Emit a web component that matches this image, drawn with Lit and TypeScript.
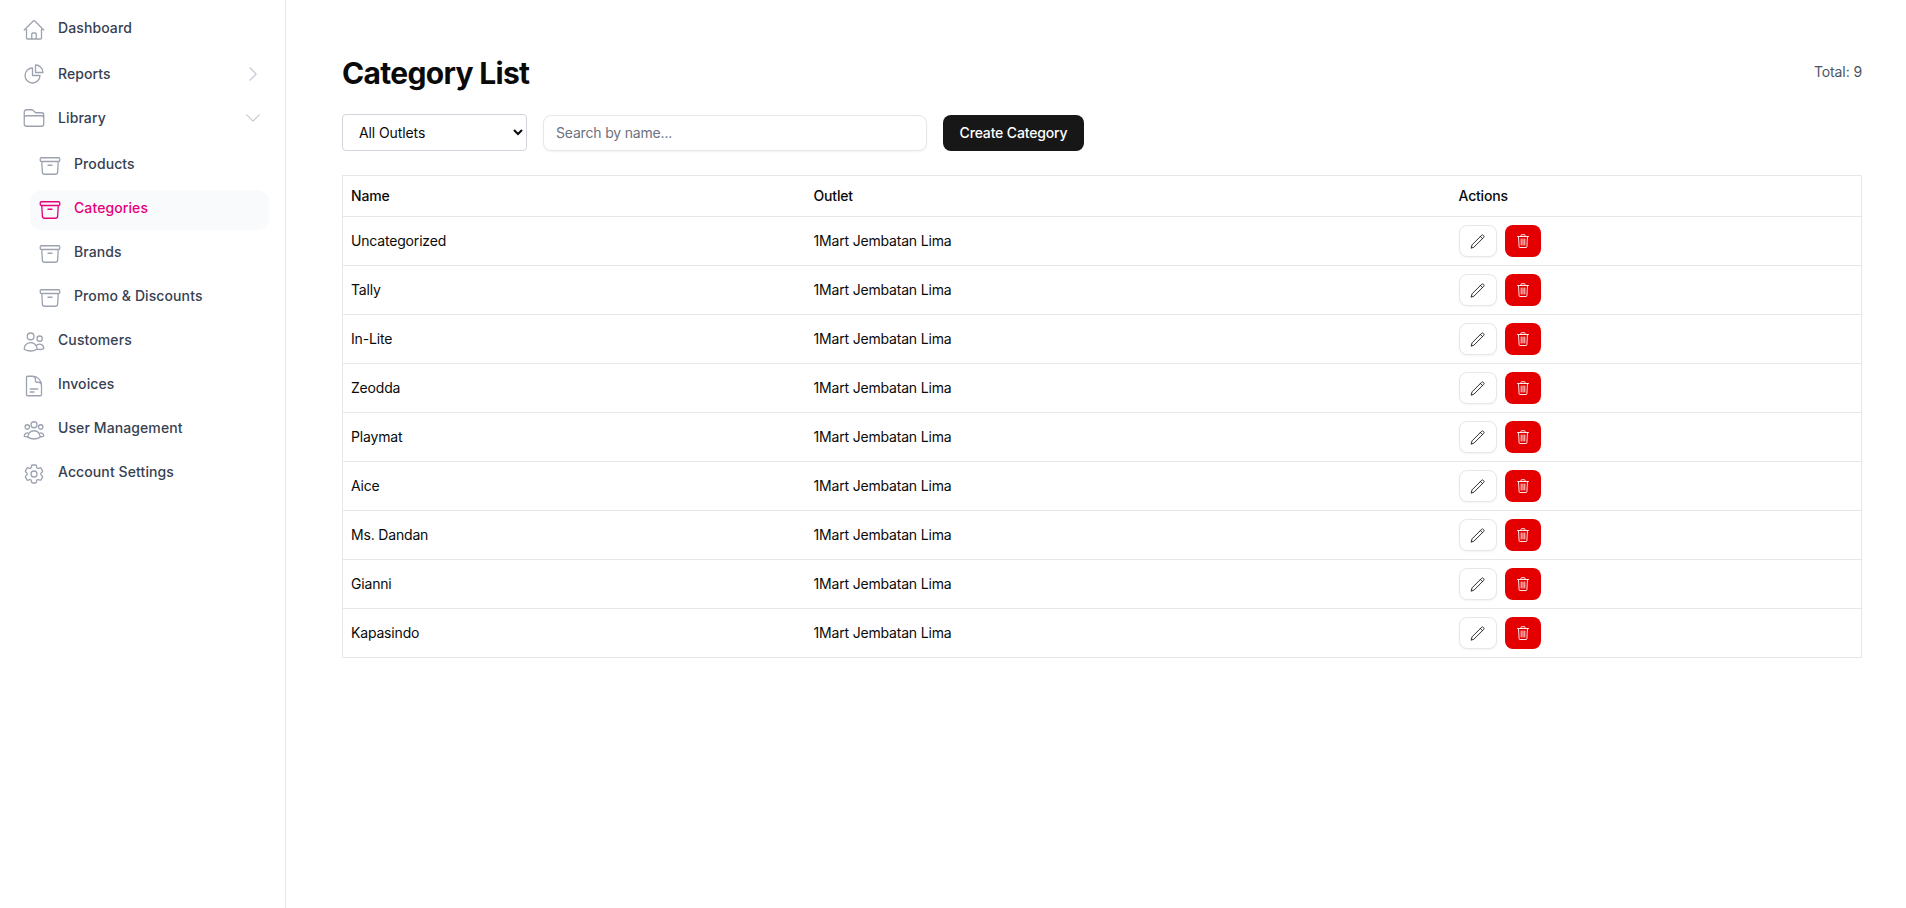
import { LitElement, html, css, svg } from "lit";
import { customElement } from "lit/decorators.js";

const ICONS: Record<string, string[]> = {
  home: ["m2.25 12 8.954-8.955c.44-.439 1.152-.439 1.591 0L21.75 12M4.5 9.75v10.125c0 .621.504 1.125 1.125 1.125H9.75v-4.875c0-.621.504-1.125 1.125-1.125h2.25c.621 0 1.125.504 1.125 1.125V21h4.125c.621 0 1.125-.504 1.125-1.125V9.75M8.25 21h8.25"],
  pie: ["M10.5 6a7.5 7.5 0 1 0 7.5 7.5h-7.5V6Z", "M13.5 10.5H21A7.5 7.5 0 0 0 13.5 3v7.5Z"],
  folder: ["M2.25 12.75V12A2.25 2.25 0 0 1 4.5 9.75h15A2.25 2.25 0 0 1 21.75 12v.75m-8.69-6.44-2.12-2.12a1.5 1.5 0 0 0-1.061-.44H4.5A2.25 2.25 0 0 0 2.25 6v12a2.25 2.25 0 0 0 2.25 2.25h15A2.25 2.25 0 0 0 21.75 18V9a2.25 2.25 0 0 0-2.25-2.25h-5.379a1.5 1.5 0 0 1-1.06-.44Z"],
  box: ["m20.25 7.5-.625 10.632a2.25 2.25 0 0 1-2.247 2.118H6.622a2.25 2.25 0 0 1-2.247-2.118L3.75 7.5M10 11.25h4M3.375 7.5h17.25c.621 0 1.125-.504 1.125-1.125v-1.5c0-.621-.504-1.125-1.125-1.125H3.375c-.621 0-1.125.504-1.125 1.125v1.5c0 .621.504 1.125 1.125 1.125Z"],
  users: ["M15 19.128a9.38 9.38 0 0 0 2.625.372 9.337 9.337 0 0 0 4.121-.952 4.125 4.125 0 0 0-7.533-2.493M15 19.128v-.003c0-1.113-.285-2.16-.786-3.07M15 19.128v.106A12.318 12.318 0 0 1 8.624 21c-2.331 0-4.512-.645-6.374-1.766l-.001-.109a6.375 6.375 0 0 1 11.964-3.07M12 6.375a3.375 3.375 0 1 1-6.75 0 3.375 3.375 0 0 1 6.75 0Zm8.25 2.25a2.625 2.625 0 1 1-5.25 0 2.625 2.625 0 0 1 5.25 0Z"],
  doc: ["M19.5 14.25v-2.625a3.375 3.375 0 0 0-3.375-3.375h-1.5A1.125 1.125 0 0 1 13.5 7.125v-1.5a3.375 3.375 0 0 0-3.375-3.375H8.25m0 12.75h7.5m-7.5 3H12M10.5 2.25H5.625c-.621 0-1.125.504-1.125 1.125v17.25c0 .621.504 1.125 1.125 1.125h12.75c.621 0 1.125-.504 1.125-1.125V11.25a9 9 0 0 0-9-9Z"],
  group: ["M18 18.72a9.094 9.094 0 0 0 3.741-.479 3 3 0 0 0-4.682-2.72m.94 3.198.001.031c0 .225-.012.447-.037.666A11.944 11.944 0 0 1 12 21c-2.17 0-4.207-.576-5.963-1.584A6.062 6.062 0 0 1 6 18.719m12 0a5.971 5.971 0 0 0-.941-3.197m0 0A5.995 5.995 0 0 0 12 12.75a5.995 5.995 0 0 0-5.058 2.772m0 0a3 3 0 0 0-4.681 2.72 8.986 8.986 0 0 0 3.74.477m.94-3.197a5.971 5.971 0 0 0-.94 3.197M15 6.75a3 3 0 1 1-6 0 3 3 0 0 1 6 0Zm6 2.25a2.25 2.25 0 1 1-4.5 0 2.25 2.25 0 0 1 4.5 0Zm-13.5 0a2.25 2.25 0 1 1-4.5 0 2.25 2.25 0 0 1 4.5 0Z"],
  cog: ["M9.594 3.94c.09-.542.56-.94 1.11-.94h2.593c.55 0 1.02.398 1.11.94l.213 1.281c.063.374.313.686.645.87.074.04.147.083.22.127.325.196.72.257 1.075.124l1.217-.456a1.125 1.125 0 0 1 1.37.49l1.296 2.247a1.125 1.125 0 0 1-.26 1.431l-1.003.827c-.293.241-.438.613-.43.992a7.723 7.723 0 0 1 0 .255c-.008.378.137.75.43.991l1.004.827c.424.35.534.955.26 1.43l-1.298 2.247a1.125 1.125 0 0 1-1.369.491l-1.217-.456c-.355-.133-.75-.072-1.076.124a6.47 6.47 0 0 1-.22.128c-.331.183-.581.495-.644.869l-.213 1.281c-.09.543-.56.94-1.11.94h-2.594c-.55 0-1.019-.398-1.11-.94l-.213-1.281c-.062-.374-.312-.686-.644-.87a6.52 6.52 0 0 1-.22-.127c-.325-.196-.72-.257-1.076-.124l-1.217.456a1.125 1.125 0 0 1-1.369-.49l-1.297-2.247a1.125 1.125 0 0 1 .26-1.431l1.004-.827c.292-.24.437-.613.43-.991a6.932 6.932 0 0 1 0-.255c.007-.38-.138-.751-.43-.992l-1.004-.827a1.125 1.125 0 0 1-.26-1.43l1.297-2.247a1.125 1.125 0 0 1 1.37-.491l1.216.456c.356.133.751.072 1.076-.124.072-.044.146-.086.22-.128.332-.183.582-.495.644-.869l.214-1.28Z", "M15 12a3 3 0 1 1-6 0 3 3 0 0 1 6 0Z"],
  right: ["m8.25 4.5 7.5 7.5-7.5 7.5"],
  down: ["m19.5 8.25-7.5 7.5-7.5-7.5"],
};

const SMALL: Record<string, string[]> = {
  pencil: ["M1.2 14.8l.9-3L11.6 2.3c.5-.5 1.2-.5 1.7 0l.4.4c.5.5.5 1.2 0 1.7L4.2 13.9z", "M10.4 3.5l2.1 2.1"],
  trash: ["M2.5 3.5h11", "M6 3.5V2.2c0-.3.2-.5.5-.5h3c.3 0 .5.2.5.5v1.3", "M3.5 3.5l.6 10.3c0 .4.3.7.7.7h6.4c.4 0 .7-.3.7-.7l.6-10.3", "M6.2 6v6", "M8 6v6", "M9.8 6v6"],
};

const icon = (name: string, cls = "ico") => html`<svg class=${cls} viewBox="0 0 24 24" fill="none" stroke="currentColor" stroke-width="1.3" stroke-linecap="round" stroke-linejoin="round">${ICONS[name].map((d) => svg`<path d=${d}></path>`)}</svg>`;
const small = (name: string) => html`<svg viewBox="0 0 16 16" fill="none" stroke="currentColor" stroke-width="0.9" stroke-linecap="round" stroke-linejoin="round">${SMALL[name].map((d) => svg`<path d=${d}></path>`)}</svg>`;

const ROWS = ["Uncategorized", "Tally", "In-Lite", "Zeodda", "Playmat", "Aice", "Ms. Dandan", "Gianni", "Kapasindo"];

@customElement("app-root")
export class AppRoot extends LitElement {
  static styles = css`
    :host { display: block; height: 908px; font-family: Inter, "Noto Sans", sans-serif; color: #0a0a0a; background: #fff; }
    * { box-sizing: border-box; }
    .shell { display: flex; height: 908px; }
    .side { width: 286px; flex: none; border-right: 1px solid #e5e7eb; padding: 10px 16px 0 22px; display: flex; flex-direction: column; gap: 4px; }
    .item { display: flex; align-items: center; gap: 12px; height: 40px; font-size: 14px; font-weight: 500; color: #374151; letter-spacing: 0.1px; }
    .item span { flex: 1; line-height: 20px; padding-bottom: 4px; }
    .item.has-chev span { padding-bottom: 0; }
    .ico { width: 24px; height: 24px; flex: none; color: #9ca3af; }
    .chev { width: 20px; height: 20px; flex: none; color: #c5c9d3; margin-right: 6px; }
    .sub { display: flex; flex-direction: column; gap: 4px; margin: 4px 0 0 8px; }
    .sub .item { padding-left: 8px; border-radius: 12px; }
    .sub .item.on { background: #f9fafb; color: #e6007a; }
    .on .ico { color: #e6007a; }
    .main { flex: 1; padding: 55px 44px 0 56px; min-width: 0; }
    .head { display: flex; justify-content: space-between; align-items: flex-start; height: 59px; }
    h1 { margin: 0; font-size: 30px; line-height: 36px; font-weight: 700; letter-spacing: -0.68px; color: #0a0a0a; }
    .total { font-size: 14px; line-height: 20px; color: #4b5563; margin-top: 7px; letter-spacing: -0.1px; }
    .bar { display: flex; align-items: flex-end; gap: 16px; height: 37px; }
    select { width: 185px; height: 37px; border: 1px solid #d1d5db; border-radius: 4px; background: #fff; padding: 0 12px; font: 400 14px Inter, sans-serif; letter-spacing: -0.1px; color: #0a0a0a; }
    input { width: 384px; height: 36px; border: 1px solid #e5e7eb; border-radius: 8px; padding: 0 12px 2px; font: 400 14px Inter, sans-serif; letter-spacing: -0.18px; box-shadow: 0 1px 2px rgba(0,0,0,.05); outline: none; }
    input::placeholder { color: #6b7280; }
    .create { width: 141px; height: 36px; padding: 0 0 2px; border: 0; border-radius: 8px; background: #171717; color: #fff; font: 500 14px Inter, sans-serif; letter-spacing: -0.15px; }
    table { width: 100%; margin-top: 24px; border-collapse: collapse; table-layout: fixed; font-size: 14px; letter-spacing: -0.18px; color: #0a0a0a; }
    th, td { border-top: 1px solid #e5e7eb; border-bottom: 1px solid #e5e7eb; padding: 0 8px; text-align: left; }
    th { height: 41px; font-weight: 500; padding-bottom: 2px; }
    td { height: 49px; font-weight: 400; padding-bottom: 2px; }
    td:last-child { padding-bottom: 0; }
    tr > :first-child { border-left: 1px solid #e5e7eb; }
    tr > :last-child { border-right: 1px solid #e5e7eb; }
    .acts { display: flex; gap: 8px; }
    .btn { width: 38px; height: 32px; display: flex; align-items: center; justify-content: center; border-radius: 8px; padding: 0; }
    .edit { background: #fff; border: 1px solid #e5e7eb; color: #171717; box-shadow: 0 1px 2px rgba(0,0,0,.05); }
    .del { width: 36px; background: #e40000; border: 0; color: #fff; }
    .btn svg { width: 16px; height: 16px; }
  `;

  private row(name: string, ic: string, opts: { on?: boolean; chev?: string } = {}) {
    return html`<div class="item ${opts.on ? "on" : ""} ${opts.chev ? "has-chev" : ""}">${icon(ic)}<span>${name}</span>${opts.chev ? icon(opts.chev, "chev") : ""}</div>`;
  }

  render() {
    return html`<div class="shell">
      <nav class="side">
        ${this.row("Dashboard", "home")}
        ${this.row("Reports", "pie", { chev: "right" })}
        ${this.row("Library", "folder", { chev: "down" })}
        <div class="sub">
          ${this.row("Products", "box")}
          ${this.row("Categories", "box", { on: true })}
          ${this.row("Brands", "box")}
          ${this.row("Promo & Discounts", "box")}
        </div>
        ${this.row("Customers", "users")}
        ${this.row("Invoices", "doc")}
        ${this.row("User Management", "group")}
        ${this.row("Account Settings", "cog")}
      </nav>
      <main class="main">
        <div class="head"><h1>Category List</h1><div class="total">Total: 9</div></div>
        <div class="bar">
          <select><option>All Outlets</option></select>
          <input placeholder="Search by name..." />
          <button class="create">Create Category</button>
        </div>
        <table>
          <colgroup><col style="width:463px" /><col style="width:645px" /><col /></colgroup>
          <thead><tr><th>Name</th><th>Outlet</th><th>Actions</th></tr></thead>
          <tbody>
            ${ROWS.map((r) => html`<tr><td>${r}</td><td>1Mart Jembatan Lima</td><td><div class="acts"><button class="btn edit">${small("pencil")}</button><button class="btn del">${small("trash")}</button></div></td></tr>`)}
          </tbody>
        </table>
      </main>
    </div>`;
  }
}
